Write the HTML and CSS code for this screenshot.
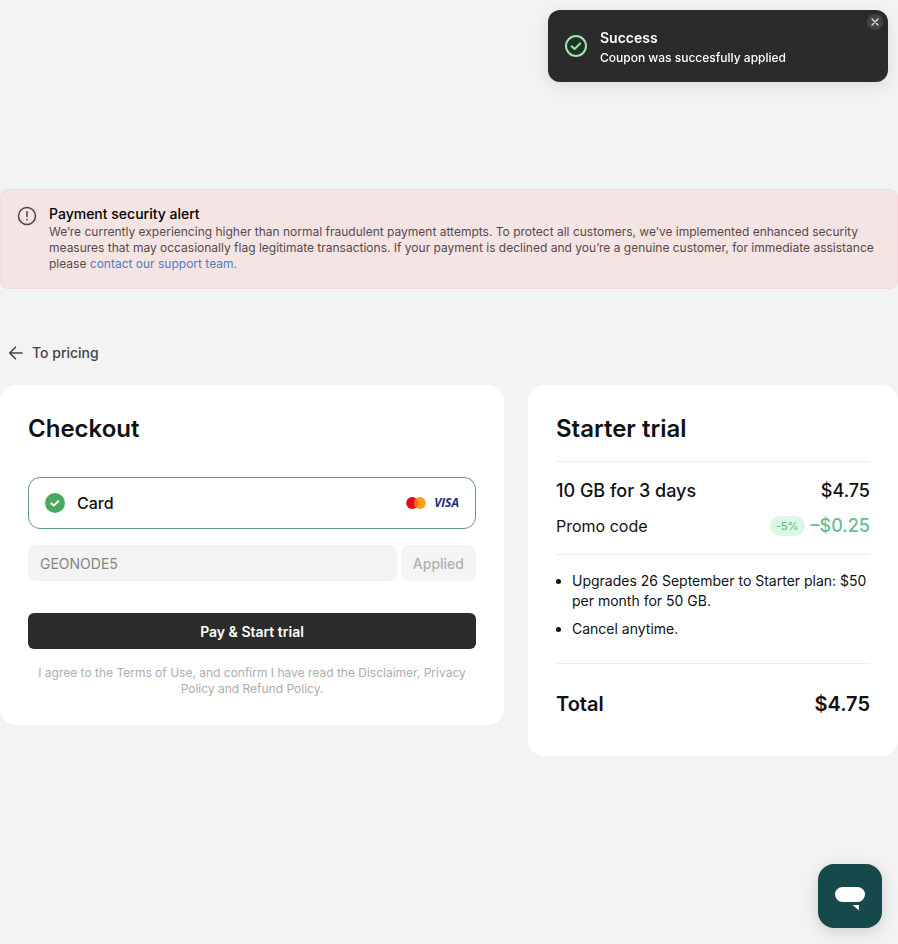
FILE: index.html
```html
<!DOCTYPE html>
<html lang="en">
<head>
  <meta charset="UTF-8">
  <meta name="viewport" content="width=device-width, initial-scale=1.0">
  <title>Checkout</title>
  <link rel="stylesheet" href="styles.css">
</head>
<body>
  <div class="toast" role="status">
    <svg class="toast-icon" width="24" height="24" viewBox="0 0 24 24" fill="none">
      <circle cx="12" cy="12" r="10" fill="#1d3324" stroke="#a3e0b5" stroke-width="2"/>
      <path d="M7.6 12.2l3 2.8 5.6-5.6" stroke="#a3e0b5" stroke-width="2" stroke-linecap="round" stroke-linejoin="round"/>
    </svg>
    <div>
      <p class="toast-title">Success</p>
      <p class="toast-text">Coupon was succesfully applied</p>
    </div>
    <button class="toast-close" type="button" aria-label="Close">
      <svg width="16" height="16" viewBox="0 0 16 16" fill="none">
        <path d="M5 5l6 6M11 5l-6 6" stroke="#e6e6e6" stroke-width="1.2" stroke-linecap="round"/>
      </svg>
    </button>
  </div>

  <main class="page">
    <section class="alert">
      <svg class="alert-icon" width="20" height="20" viewBox="0 0 20 20" fill="none">
        <circle cx="10" cy="10" r="8.5" stroke="#4d4143" stroke-width="1.5"/>
        <path d="M10 5.8v4.7" stroke="#4d4143" stroke-width="1.5" stroke-linecap="round"/>
        <circle cx="10" cy="13.6" r="0.9" fill="#4d4143"/>
      </svg>
      <div>
        <h2 class="alert-title">Payment security alert</h2>
        <p class="alert-text">We’re currently experiencing higher than normal fraudulent payment attempts. To protect all customers, we’ve implemented enhanced security measures that may occasionally flag legitimate transactions. If your payment is declined and you’re a genuine customer, for immediate assistance please <a href="#support">contact our support team.</a></p>
      </div>
    </section>

    <a class="back" href="#pricing">
      <svg width="16" height="16" viewBox="0 0 16 16" fill="none">
        <path d="M14 8H2M7.5 2.2L1.7 8l5.8 5.8" stroke="#444" stroke-width="1.6" stroke-linecap="round" stroke-linejoin="round"/>
      </svg>
      To pricing
    </a>

    <div class="columns">
      <form class="card">
        <h1 class="card-title">Checkout</h1>

        <label class="method">
          <input class="method-radio" type="radio" name="method" checked>
          <svg width="20" height="20" viewBox="0 0 20 20" fill="none">
            <circle cx="10" cy="10" r="10" fill="#4aa860"/>
            <path d="M6.4 10.4l2.4 2.1 4.6-4.4" stroke="#fff" stroke-width="2" stroke-linecap="round" stroke-linejoin="round"/>
          </svg>
          <span class="method-name">Card</span>
          <svg width="20" height="12" viewBox="0 0 20 12">
            <circle cx="6.2" cy="6" r="6" fill="#e4041f"/>
            <circle cx="13.8" cy="6" r="6" fill="#f79f1a"/>
            <path d="M10 1.35a6 6 0 0 1 0 9.3a6 6 0 0 1 0-9.3z" fill="#f6621b"/>
          </svg>
          <span class="visa">VISA</span>
        </label>

        <div class="promo">
          <input class="promo-input" type="text" value="GEONODE5" aria-label="Promo code" disabled>
          <button class="promo-button" type="button" disabled>Applied</button>
        </div>

        <button class="pay" type="button">Pay &amp; Start trial</button>
        <p class="legal">I agree to the Terms of Use, and confirm I have read the Disclaimer, Privacy Policy and Refund Policy.</p>
      </form>

      <section class="card">
        <h2 class="card-title summary-title">Starter trial</h2>
        <div class="prices">
          <div class="row row-plan">
            <span>10 GB for 3 days</span>
            <span>$4.75</span>
          </div>
          <div class="row row-promo">
            <span>Promo code</span>
            <span class="discount"><span class="badge">-5%</span>–$0.25</span>
          </div>
        </div>
        <ul class="notes">
          <li>Upgrades 26 September to Starter plan: $50 per month for 50 GB.</li>
          <li>Cancel anytime.</li>
        </ul>
        <div class="row row-total">
          <span>Total</span>
          <span>$4.75</span>
        </div>
      </section>
    </div>
  </main>

  <button class="chat" type="button" aria-label="Open chat">
    <svg width="32" height="32" viewBox="0 0 32 32">
      <rect x="1" y="7" width="30" height="15" rx="7.5" fill="#fff"/>
      <path d="M18.5 25H25v5.5z" fill="#fff"/>
    </svg>
  </button>
</body>
</html>
```
FILE: styles.css
```css
* {
  box-sizing: border-box;
}

body {
  margin: 0;
  background: #f3f3f3;
  color: #111;
  font-family: Inter, "Open Sans", sans-serif;
  font-size: 14px;
  line-height: 20px;
}

h1, h2, p, ul {
  margin: 0;
}

button, input {
  font-family: inherit;
  border: none;
}

/* Toast */
.toast {
  position: fixed;
  top: 10px;
  right: 10px;
  width: 340px;
  padding: 18px 16px 14px;
  display: flex;
  align-items: flex-start;
  gap: 12px;
  border-radius: 12px;
  background: #2b2b2b;
  color: #fff;
  box-shadow: 0 4px 16px rgba(0, 0, 0, 0.1);
}

.toast-icon {
  margin-top: 6px;
}

.toast-title {
  font-weight: 600;
}

.toast-text {
  font-size: 12px;
  font-weight: 500;
}

.toast-close {
  position: absolute;
  top: 4px;
  right: 5px;
  padding: 0;
  display: flex;
  border-radius: 50%;
  background: #444;
  cursor: pointer;
}

/* Page */
.page {
  padding-top: 189px;
}

.alert {
  display: flex;
  gap: 12px;
  padding: 14px 16px 16px;
  border: 1px solid #f3d9dc;
  border-radius: 8px;
  background: #f5e4e4;
}

.alert-icon {
  flex: none;
  margin-top: 2px;
}

.alert-title {
  font-size: 14px;
  line-height: 20px;
  font-weight: 500;
  color: #000;
}

.alert-text {
  font-size: 12px;
  line-height: 16px;
  color: #554a4b;
}

.alert-text a {
  color: #4a7fc4;
  text-decoration: none;
}

.back {
  display: inline-flex;
  align-items: center;
  gap: 8px;
  margin: 54px 8px 22px;
  color: #444;
  font-weight: 500;
  text-decoration: none;
}

.columns {
  display: grid;
  grid-template-columns: minmax(0, 1fr) 370px;
  align-items: start;
  gap: 24px;
}

.card {
  padding: 28px;
  border-radius: 16px;
  background: #fff;
}

.card-title {
  margin-bottom: 32px;
  font-size: 24px;
  line-height: 32px;
  font-weight: 600;
}

/* Checkout form */
.method {
  display: flex;
  align-items: center;
  gap: 8px;
  height: 52px;
  padding: 0 16px;
  border: 1px solid #5b9c78;
  border-radius: 12px;
  cursor: pointer;
}

.method-radio {
  position: absolute;
  opacity: 0;
}

.method-name {
  flex: 1;
  padding-left: 4px;
  font-size: 16px;
  font-weight: 500;
}

.visa {
  color: #1a2b7b;
  font-family: "Open Sans", sans-serif;
  font-size: 12px;
  font-style: italic;
  font-weight: 700;
}

.promo {
  display: flex;
  gap: 4px;
  margin: 16px 0 32px;
}

.promo-input {
  flex: 1;
  min-width: 0;
  height: 36px;
  padding: 0 12px;
  border-radius: 8px;
  background: #f3f3f3;
  color: #858585;
  font-size: 14px;
}

.promo-button {
  height: 36px;
  padding: 0 12px;
  border-radius: 8px;
  background: #f5f5f5;
  color: #b0b0b0;
  font-size: 14px;
  font-weight: 500;
}

.pay {
  width: 100%;
  height: 36px;
  border-radius: 6px;
  background: #2b2b2b;
  color: #fff;
  font-size: 14px;
  font-weight: 600;
  cursor: pointer;
}

.legal {
  margin-top: 16px;
  color: #adadad;
  font-size: 12px;
  line-height: 16px;
  text-align: center;
}

/* Order summary */
.summary-title {
  margin-bottom: 16px;
}

.row {
  display: flex;
  align-items: center;
  justify-content: space-between;
}

.prices {
  display: grid;
  gap: 10px;
  padding: 16px 0;
  border-top: 1px solid #ececec;
  border-bottom: 1px solid #ececec;
}

.row-plan {
  font-size: 18px;
  line-height: 26px;
  font-weight: 500;
}

.row-promo {
  font-size: 16px;
  line-height: 24px;
}

.discount {
  display: flex;
  align-items: center;
  gap: 6px;
  color: #68bb97;
  font-size: 18px;
  font-weight: 500;
}

.badge {
  padding: 0 6px;
  border-radius: 10px;
  background: #dcf7e6;
  font-size: 11px;
  line-height: 20px;
}

.notes {
  display: grid;
  gap: 8px;
  padding: 16px 0 24px 16px;
  border-bottom: 1px solid #ececec;
}

.row-total {
  margin: 24px 0 8px;
  font-size: 20px;
  line-height: 32px;
  font-weight: 600;
}

/* Chat launcher */
.chat {
  position: fixed;
  right: 16px;
  bottom: 16px;
  width: 64px;
  height: 64px;
  padding: 0;
  display: flex;
  align-items: center;
  justify-content: center;
  border-radius: 16px;
  background: #17484b;
  box-shadow: 0 4px 16px rgba(0, 0, 0, 0.15);
  cursor: pointer;
}
```
